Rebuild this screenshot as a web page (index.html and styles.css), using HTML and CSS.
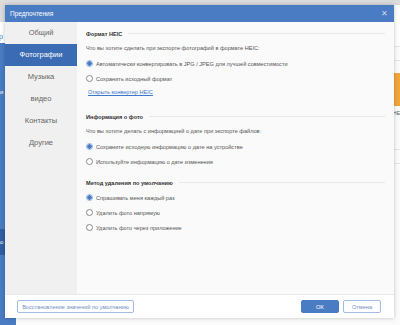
FILE: index.html
```html
<!DOCTYPE html>
<html lang="ru">
	<head>
		<meta charset="UTF-8" />
		<title>Предпочтения</title>
		<link rel="stylesheet" href="styles.css">
	</head>
	<body>
		<!-- app behind the dialog -->
		<div class="app">
			<div class="app-side">
				<div class="app-side-head"></div>
				<div class="app-side-tab">р</div>
				<div class="app-side-blue">
					<span class="app-side-text">и</span>
					<div class="app-side-band">о</div>
				</div>
			</div>
			<div class="app-content">
				<div class="app-top"></div>
				<div class="app-row app-row-first"></div>
				<div class="app-row"></div>
				<div class="app-row app-row-tall">
					<div class="app-badge"></div>
					<span class="app-badge-text">HE</span>
				</div>
				<div class="app-row"></div>
			</div>
		</div>

		<div class="dialog">
			<div class="dialog-title">
				<span>Предпочтения</span>
				<span class="dialog-close">&#x2715;</span>
			</div>
			<div class="dialog-body">
				<div class="side-menu">
					<div class="side-item">Общий</div>
					<div class="side-item active">Фотографии</div>
					<div class="side-item">Музыка</div>
					<div class="side-item">видео</div>
					<div class="side-item">Контакты</div>
					<div class="side-item">Другие</div>
				</div>
				<div class="settings">
					<div class="section">
						<div class="section-head">Формат HEIC</div>
						<div class="question">Что вы хотите сделать при экспорте фотографий в формате HEIC:</div>
						<label class="option"><span class="radio checked"></span>Автоматически конвертировать в JPG / JPEG для лучшей совместимости</label>
						<label class="option"><span class="radio"></span>Сохранить исходный формат</label>
						<a class="link-row" href="#">Открыть конвертер HEIC</a>
					</div>
					<div class="section">
						<div class="section-head">Информация о фото</div>
						<div class="question">Что вы хотите делать с информацией о дате при экспорте файлов:</div>
						<label class="option"><span class="radio checked"></span>Сохраните исходную информацию о дате на устройстве</label>
						<label class="option"><span class="radio"></span>Используйте информацию о дате изменения</label>
					</div>
					<div class="section">
						<div class="section-head">Метод удаления по умолчанию</div>
						<label class="option"><span class="radio checked"></span>Спрашивать меня каждый раз</label>
						<label class="option"><span class="radio"></span>Удалить фото напрямую</label>
						<label class="option"><span class="radio"></span>Удалить фото через приложение</label>
					</div>
				</div>
			</div>
			<div class="dialog-footer">
				<button class="btn btn-outline btn-reset">Восстановление значений по умолчанию</button>
				<div class="footer-right">
					<button class="btn btn-primary">OK</button>
					<button class="btn btn-outline btn-cancel">Отмена</button>
				</div>
			</div>
		</div>
	</body>
</html>
```

FILE: styles.css
```css
:root {
	--blue: #4a7cc4;
	--blue-dark: #3a6bb3;
	--side-bg: #f0f0f0;
	--text: #444;
	--text-light: #666;
	--line: #e8e8e8;
}

* {
	margin: 0;
	padding: 0;
	box-sizing: border-box;
}

body {
	width: 400px;
	height: 325px;
	overflow: hidden;
	position: relative;
	font-family: "Liberation Sans", Arial, sans-serif;
	color: var(--text);
	background: var(--blue);
}

/* background app */
.app {
	display: grid;
	grid-template-columns: 16px 1fr;
	height: 325px;
}

.app-side {
	display: flex;
	flex-direction: column;
	background: var(--blue);
}

.app-side-head {
	height: 22px;
	background: #dcdcdc;
}

.app-side-tab {
	height: 21px;
	background: #fff;
	color: var(--blue);
	font-size: 7px;
	line-height: 30px;
	text-indent: -1px;
	overflow: hidden;
}

.app-side-blue {
	flex: 1;
	background: var(--blue);
	color: #fff;
	font-size: 6px;
	padding-top: 46px;
}

.app-side-band {
	margin-top: 134px;
	height: 26px;
	background: #2f5fa6;
	line-height: 26px;
}

.app-content {
	background: #fbfbfb;
}

.app-top {
	height: 5px;
	background: #dcdcdc;
}

.app-row {
	height: 14px;
	border-bottom: 1px solid #e6e6e6;
}

.app-row-first {
	height: 42px;
	background: #fff;
}

.app-row-tall {
	height: 89px;
	position: relative;
}

.app-badge {
	position: absolute;
	right: -10px;
	top: 12px;
	width: 30px;
	height: 33px;
	border-radius: 7px;
	background: #f3a53d;
}

.app-badge-text {
	position: absolute;
	right: 0;
	top: 49px;
	font-size: 5px;
	color: #555;
}

/* dialog */
.dialog {
	position: absolute;
	left: 5px;
	top: 5px;
	width: 389px;
	height: 313px;
	background: #fafafa;
	display: flex;
	flex-direction: column;
	box-shadow: 0 0 4px rgba(0, 0, 0, 0.25);
}

.dialog-title {
	height: 17px;
	background: var(--blue);
	color: #fff;
	font-size: 6.5px;
	display: flex;
	align-items: center;
	justify-content: space-between;
	padding: 0 6px 0 5px;
}

.dialog-close {
	font-size: 8px;
	color: #c8d8ef;
}

.dialog-body {
	flex: 1;
	display: flex;
}

.side-menu {
	width: 72px;
	background: var(--side-bg);
}

.side-item {
	height: 22px;
	line-height: 22px;
	text-align: center;
	font-size: 7.5px;
	color: var(--text-light);
}

.side-item.active {
	background: var(--blue-dark);
	color: #fff;
}

.settings {
	flex: 1;
	display: flex;
	flex-direction: column;
	gap: 6px;
	padding: 4px 9px 0 9px;
}

.section-head {
	height: 15px;
	display: flex;
	align-items: center;
	gap: 6px;
	font-size: 5.6px;
	font-weight: bold;
	color: #333;
}

.section-head::after {
	content: "";
	flex: 1;
	height: 1px;
	background: var(--line);
}

.question {
	height: 15px;
	line-height: 15px;
	font-size: 5.6px;
	color: #555;
}

.option {
	height: 15px;
	display: flex;
	align-items: center;
	gap: 3px;
	font-size: 5.6px;
	color: #555;
}

.radio {
	width: 7px;
	height: 7px;
	border: 1px solid #888;
	border-radius: 50%;
	background: #fff;
}

.radio.checked {
	border-color: #8fb2e3;
	background: radial-gradient(circle, var(--blue) 0, var(--blue) 2px, #fff 2.5px);
}

.link-row {
	display: block;
	height: 13px;
	line-height: 13px;
	margin-bottom: 4px;
	padding-left: 2px;
	font-size: 5.6px;
	color: #3b78c8;
}

.dialog-footer {
	height: 24px;
	border-top: 1px solid var(--line);
	display: flex;
	align-items: center;
	justify-content: space-between;
	padding: 0 13px 0 12px;
	background: #fff;
}

.footer-right {
	display: flex;
	gap: 4px;
}

.btn {
	height: 13px;
	font-family: inherit;
	font-size: 5.6px;
	border-radius: 2px;
	white-space: nowrap;
	cursor: pointer;
}

.btn-outline {
	border: 1px solid #9fbde6;
	background: #fff;
	color: #6f8fbf;
	padding: 0;
}

.btn-reset {
	width: 117px;
}

.btn-primary {
	width: 38px;
	border: 1px solid var(--blue);
	background: var(--blue);
	color: #fff;
}

.btn-cancel {
	width: 38px;
}
```
